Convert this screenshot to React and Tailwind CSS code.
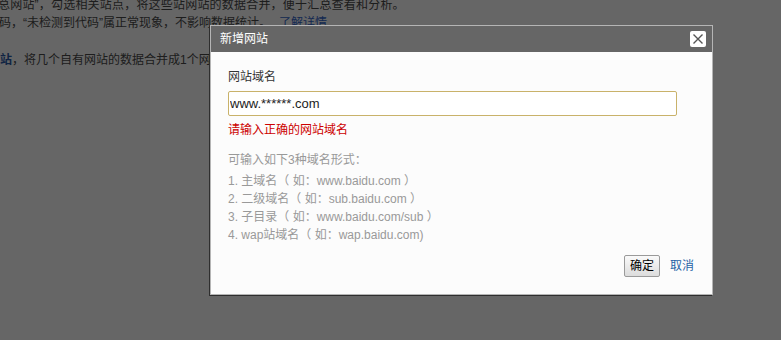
import React, { useState } from 'react'

const font = { fontFamily: '"Liberation Sans", "Noto Sans CJK SC", sans-serif' }

const formats = [
  '1. 主域名（ 如：www.baidu.com ）',
  '2. 二级域名（ 如：sub.baidu.com ）',
  '3. 子目录（ 如：www.baidu.com/sub ）',
  '4. wap站域名（ 如：wap.baidu.com)'
]

const CloseIcon = () => (
  <svg width="10" height="10" viewBox="0 0 10 10">
    <path d="M0.5 0.5 L9.5 9.5 M9.5 0.5 L0.5 9.5" stroke="#555" strokeWidth="1.4" fill="none" />
  </svg>
)

const App = () => {
  const [domain, setDomain] = useState('www.******.com')

  return (
    <div className="relative w-[781px] h-[340px] overflow-hidden bg-white text-[12px] text-[#4a4a4a]" style={font}>
      {/* page behind the overlay */}
      <div className="whitespace-nowrap">
        <div className="leading-[18px] -mt-[4px] -ml-[2px] tracking-[0.2px]">
          总网站”，勾选相关站点，将这些站网站的数据合并，便于汇总查看和分析。
        </div>
        <div className="leading-[18px] -ml-[1px]">
          码，“未检测到代码”属正常现象，不影响数据统计。
          <a className="text-[#3366cc] ml-2">了解详情</a>
        </div>
        <div className="leading-[18px] mt-[19px]">
          <b className="text-[#2a5aa8]">站</b>，将几个自有网站的数据合并成1个网站，方便查看汇总数据。
        </div>
      </div>

      {/* overlay */}
      <div className="absolute inset-0 bg-black/60" />

      {/* dialog */}
      <div className="absolute left-[210px] top-[25px] w-[503px] h-[270px] border border-[#b5b5b5] shadow-[-1px_1px_0_#2e2e2e] bg-[#fcfcfc] flex flex-col">
        <div className="h-[26px] bg-[#666] flex items-center justify-between pl-[9px] pr-[6px]">
          <span className="text-white text-[12px]">新增网站</span>
          <button className="w-[16px] h-[16px] bg-white rounded-[2px] flex items-center justify-center">
            <CloseIcon />
          </button>
        </div>
        <div className="flex-1 flex flex-col pl-[17px] pr-[35px]">
          <div className="mt-[17px] leading-[16px] text-[#333]">网站域名</div>
          <input
            autoFocus
            value={domain}
            onChange={(e) => setDomain(e.target.value)}
            className="mt-[6px] h-[25px] w-[449px] border border-[#c9b26a] rounded-[2px] bg-white px-[1px] text-[13px] text-[#222] caret-black outline-none"
            style={font}
          />
          <div className="mt-[6px] leading-[16px] text-[#cc0000]">请输入正确的网站域名</div>
          <div className="mt-[14px] leading-[16px] text-[#999]">可输入如下3种域名形式：</div>
          <div className="mt-[4px] flex flex-col text-[#999]">
            {formats.map((f) => (
              <div key={f} className="leading-[18px]">{f}</div>
            ))}
          </div>
          <div className="mt-[11px] flex items-center justify-end gap-[10px] -mr-[17px]">
            <button
              className="h-[22px] px-[5px] border border-[#9a9a9a] rounded-[2px] bg-gradient-to-b from-[#fafafa] to-[#dcdcdc] text-[12px] text-black"
              style={font}
            >
              确定
            </button>
            <a className="text-[#1f63a6] cursor-pointer">取消</a>
          </div>
        </div>
      </div>
    </div>
  )
}

export default App
